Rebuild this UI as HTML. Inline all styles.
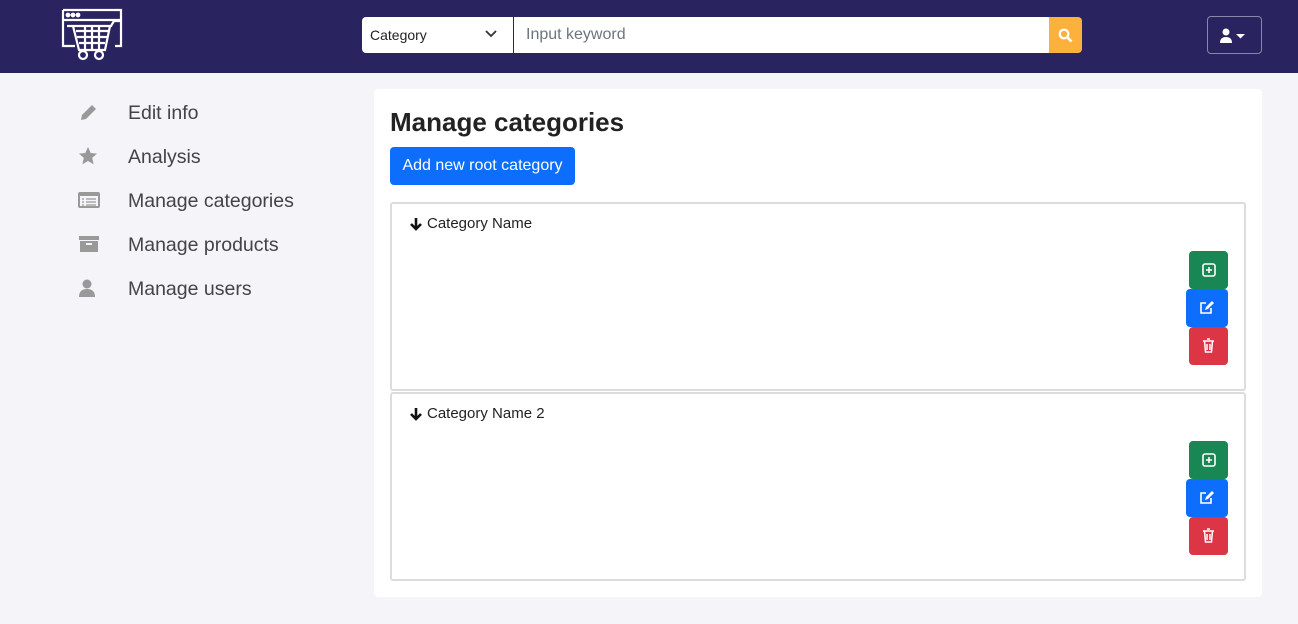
<!DOCTYPE html>
<html><head><meta charset="utf-8"><style>
*{box-sizing:border-box;margin:0;padding:0}
body{width:1298px;height:624px;background:#f4f4f9;font-family:"Liberation Sans",sans-serif;position:relative;overflow:hidden;color:#212529}
.hdr{position:absolute;left:0;top:0;width:1298px;height:73px;background:#29235f}
.sel{position:absolute;left:362px;top:17px;width:151px;height:36px;background:#fff;border-radius:4px 0 0 4px;font-size:14px;padding:10px 8px;color:#222}
.inp{position:absolute;left:514px;top:17px;width:535px;height:36px;background:#fff;font-size:16px;color:#6c757d;padding:9px 12px}
.sbtn{position:absolute;left:1049px;top:17px;width:33px;height:36px;background:#fbb13c;border-radius:0 4px 4px 0}
.ubtn{position:absolute;left:1207px;top:16px;width:55px;height:38px;border:1px solid #8a87a8;border-radius:4px}
.nav{position:absolute;left:78px;font-size:19.5px;color:#444}
.nav span{position:absolute;left:50px;top:1px;white-space:nowrap}
.card{position:absolute;left:374px;top:89px;width:888px;height:508px;background:#fff;border-radius:4px}
h1{position:absolute;left:390px;top:107px;font-size:26px;font-weight:bold;color:#222}
.add{position:absolute;left:390px;top:147px;width:185px;height:38px;background:#0d6efd;border-radius:4px;color:#fff;font-size:16px;text-align:center;line-height:38px}
.box{position:absolute;left:390px;width:856px;height:189px;border:2px solid #dcdcdc;border-radius:3px}
.box .t{position:absolute;left:35px;top:11px;font-size:15px;color:#222}
.box svg{position:absolute;left:17px;top:13px}
.b{position:absolute;width:39px;height:38px;border-radius:4px}
</style></head><body>
<div class="hdr">
<svg style="position:absolute;left:61px;top:8px" width="62" height="54" viewBox="0 0 62 54" fill="none" stroke="#fff" stroke-width="2.2">
<path d="M2 2h58v36h-6M2 2v36h12M2 12h58"/>
<circle cx="7" cy="7" r="1.3" fill="#fff"/><circle cx="12" cy="7" r="1.3" fill="#fff"/><circle cx="17" cy="7" r="1.3" fill="#fff"/>
<path d="M6 18h6l6 24h26l5-24M12 18h38l3-5h6M15 23h32M16 29h30M18 35h26M24 18v24M31 18v24M38 18v24"/>
<circle cx="22" cy="47" r="4"/><circle cx="38" cy="47" r="4"/>
</svg>
<div class="sel">Category<svg style="position:absolute;right:16px;top:13px" width="12" height="8" viewBox="0 0 12 8"><path d="M1 1l5 5 5-5" stroke="#333" stroke-width="1.8" fill="none"/></svg></div>
<div class="inp">Input keyword</div>
<div class="sbtn"><svg style="position:absolute;left:9px;top:11px" width="15" height="15" viewBox="0 0 15 15"><circle cx="6" cy="6" r="4.3" stroke="#fff" stroke-width="2.2" fill="none"/><path d="M9 9l4.5 4.5" stroke="#fff" stroke-width="2.6"/></svg></div>
<div class="ubtn"><svg style="position:absolute;left:12px;top:11px" width="28" height="16" viewBox="0 0 28 16"><circle cx="6" cy="4" r="3.5" fill="#fff"/><path d="M0 15q0-6 6-6t6 6z" fill="#fff"/><path d="M16 6h9l-4.5 4.5z" fill="#fff"/></svg></div>
</div>
<div class="nav" style="top:101px"><svg style="position:absolute;left:0;top:2px" width="20" height="20" viewBox="0 0 20 20"><path d="M3 17l1-5L14 2l4 4L8 16z" fill="#999"/></svg><span>Edit info</span></div>
<div class="nav" style="top:145px"><svg style="position:absolute;left:0;top:1px" width="20" height="20" viewBox="0 0 20 20"><path d="M10 1l2.7 6 6.3.6-4.8 4.3 1.4 6.4L10 15l-5.6 3.3 1.4-6.4L1 7.6 7.3 7z" fill="#999"/></svg><span>Analysis</span></div>
<div class="nav" style="top:189px"><svg style="position:absolute;left:0;top:3px" width="22" height="16" viewBox="0 0 22 16"><rect x="1" y="1" width="20" height="14" rx="1" fill="none" stroke="#999" stroke-width="2"/><rect x="1" y="1" width="20" height="3" fill="#999"/><path d="M4 7h2M8 7h10M4 10h2M8 10h10M4 13h2M8 13h10" stroke="#999" stroke-width="1.3"/></svg><span>Manage categories</span></div>
<div class="nav" style="top:233px"><svg style="position:absolute;left:0;top:2px" width="22" height="18" viewBox="0 0 22 18"><rect x="1" y="1" width="20" height="4" fill="#999"/><rect x="2" y="6" width="18" height="11" fill="#999"/><rect x="8" y="8" width="6" height="2" fill="#f4f4f9"/></svg><span>Manage products</span></div>
<div class="nav" style="top:277px"><svg style="position:absolute;left:1px;top:2px" width="16" height="18" viewBox="0 0 16 18"><circle cx="8" cy="5" r="4.5" fill="#999"/><path d="M0 18q0-8 8-8t8 8z" fill="#999"/></svg><span>Manage users</span></div>
<div class="card"></div>
<h1>Manage categories</h1>
<div class="add">Add new root category</div>
<div class="box" style="top:202px"><svg width="14" height="14" viewBox="0 0 14 14"><path d="M7 1v11M2 7l5 5 5-5" stroke="#111" stroke-width="2.6" fill="none"/></svg><div class="t">Category Name</div></div>
<div class="box" style="top:392px"><svg width="14" height="14" viewBox="0 0 14 14"><path d="M7 1v11M2 7l5 5 5-5" stroke="#111" stroke-width="2.6" fill="none"/></svg><div class="t">Category Name 2</div></div>
<div class="b" style="left:1189px;top:251px;background:#198754"><svg style="position:absolute;left:13px;top:12px" width="14" height="14" viewBox="0 0 14 14"><rect x="1" y="1" width="12" height="12" rx="2" fill="none" stroke="#fff" stroke-width="1.6"/><path d="M7 4v6M4 7h6" stroke="#fff" stroke-width="1.6"/></svg></div>
<div class="b" style="left:1186px;top:289px;width:42px;background:#0d6efd"><svg style="position:absolute;left:13px;top:11px" width="16" height="15" viewBox="0 0 16 15"><path d="M7 3H2v10h10V8" fill="none" stroke="#fff" stroke-width="1.6"/><path d="M6 10l1-3 6-6 2 2-6 6z" fill="#fff"/></svg></div>
<div class="b" style="left:1189px;top:327px;background:#dc3545"><svg style="position:absolute;left:13px;top:11px" width="13" height="15" viewBox="0 0 13 15"><path d="M1 3h11M5 1h3M2.5 3l1 11h6l1-11M5 6v6M8 6v6" fill="none" stroke="#fff" stroke-width="1.5"/></svg></div>
<div class="b" style="left:1189px;top:441px;background:#198754"><svg style="position:absolute;left:13px;top:12px" width="14" height="14" viewBox="0 0 14 14"><rect x="1" y="1" width="12" height="12" rx="2" fill="none" stroke="#fff" stroke-width="1.6"/><path d="M7 4v6M4 7h6" stroke="#fff" stroke-width="1.6"/></svg></div>
<div class="b" style="left:1186px;top:479px;width:42px;background:#0d6efd"><svg style="position:absolute;left:13px;top:11px" width="16" height="15" viewBox="0 0 16 15"><path d="M7 3H2v10h10V8" fill="none" stroke="#fff" stroke-width="1.6"/><path d="M6 10l1-3 6-6 2 2-6 6z" fill="#fff"/></svg></div>
<div class="b" style="left:1189px;top:517px;background:#dc3545"><svg style="position:absolute;left:13px;top:11px" width="13" height="15" viewBox="0 0 13 15"><path d="M1 3h11M5 1h3M2.5 3l1 11h6l1-11M5 6v6M8 6v6" fill="none" stroke="#fff" stroke-width="1.5"/></svg></div>
</body></html>
